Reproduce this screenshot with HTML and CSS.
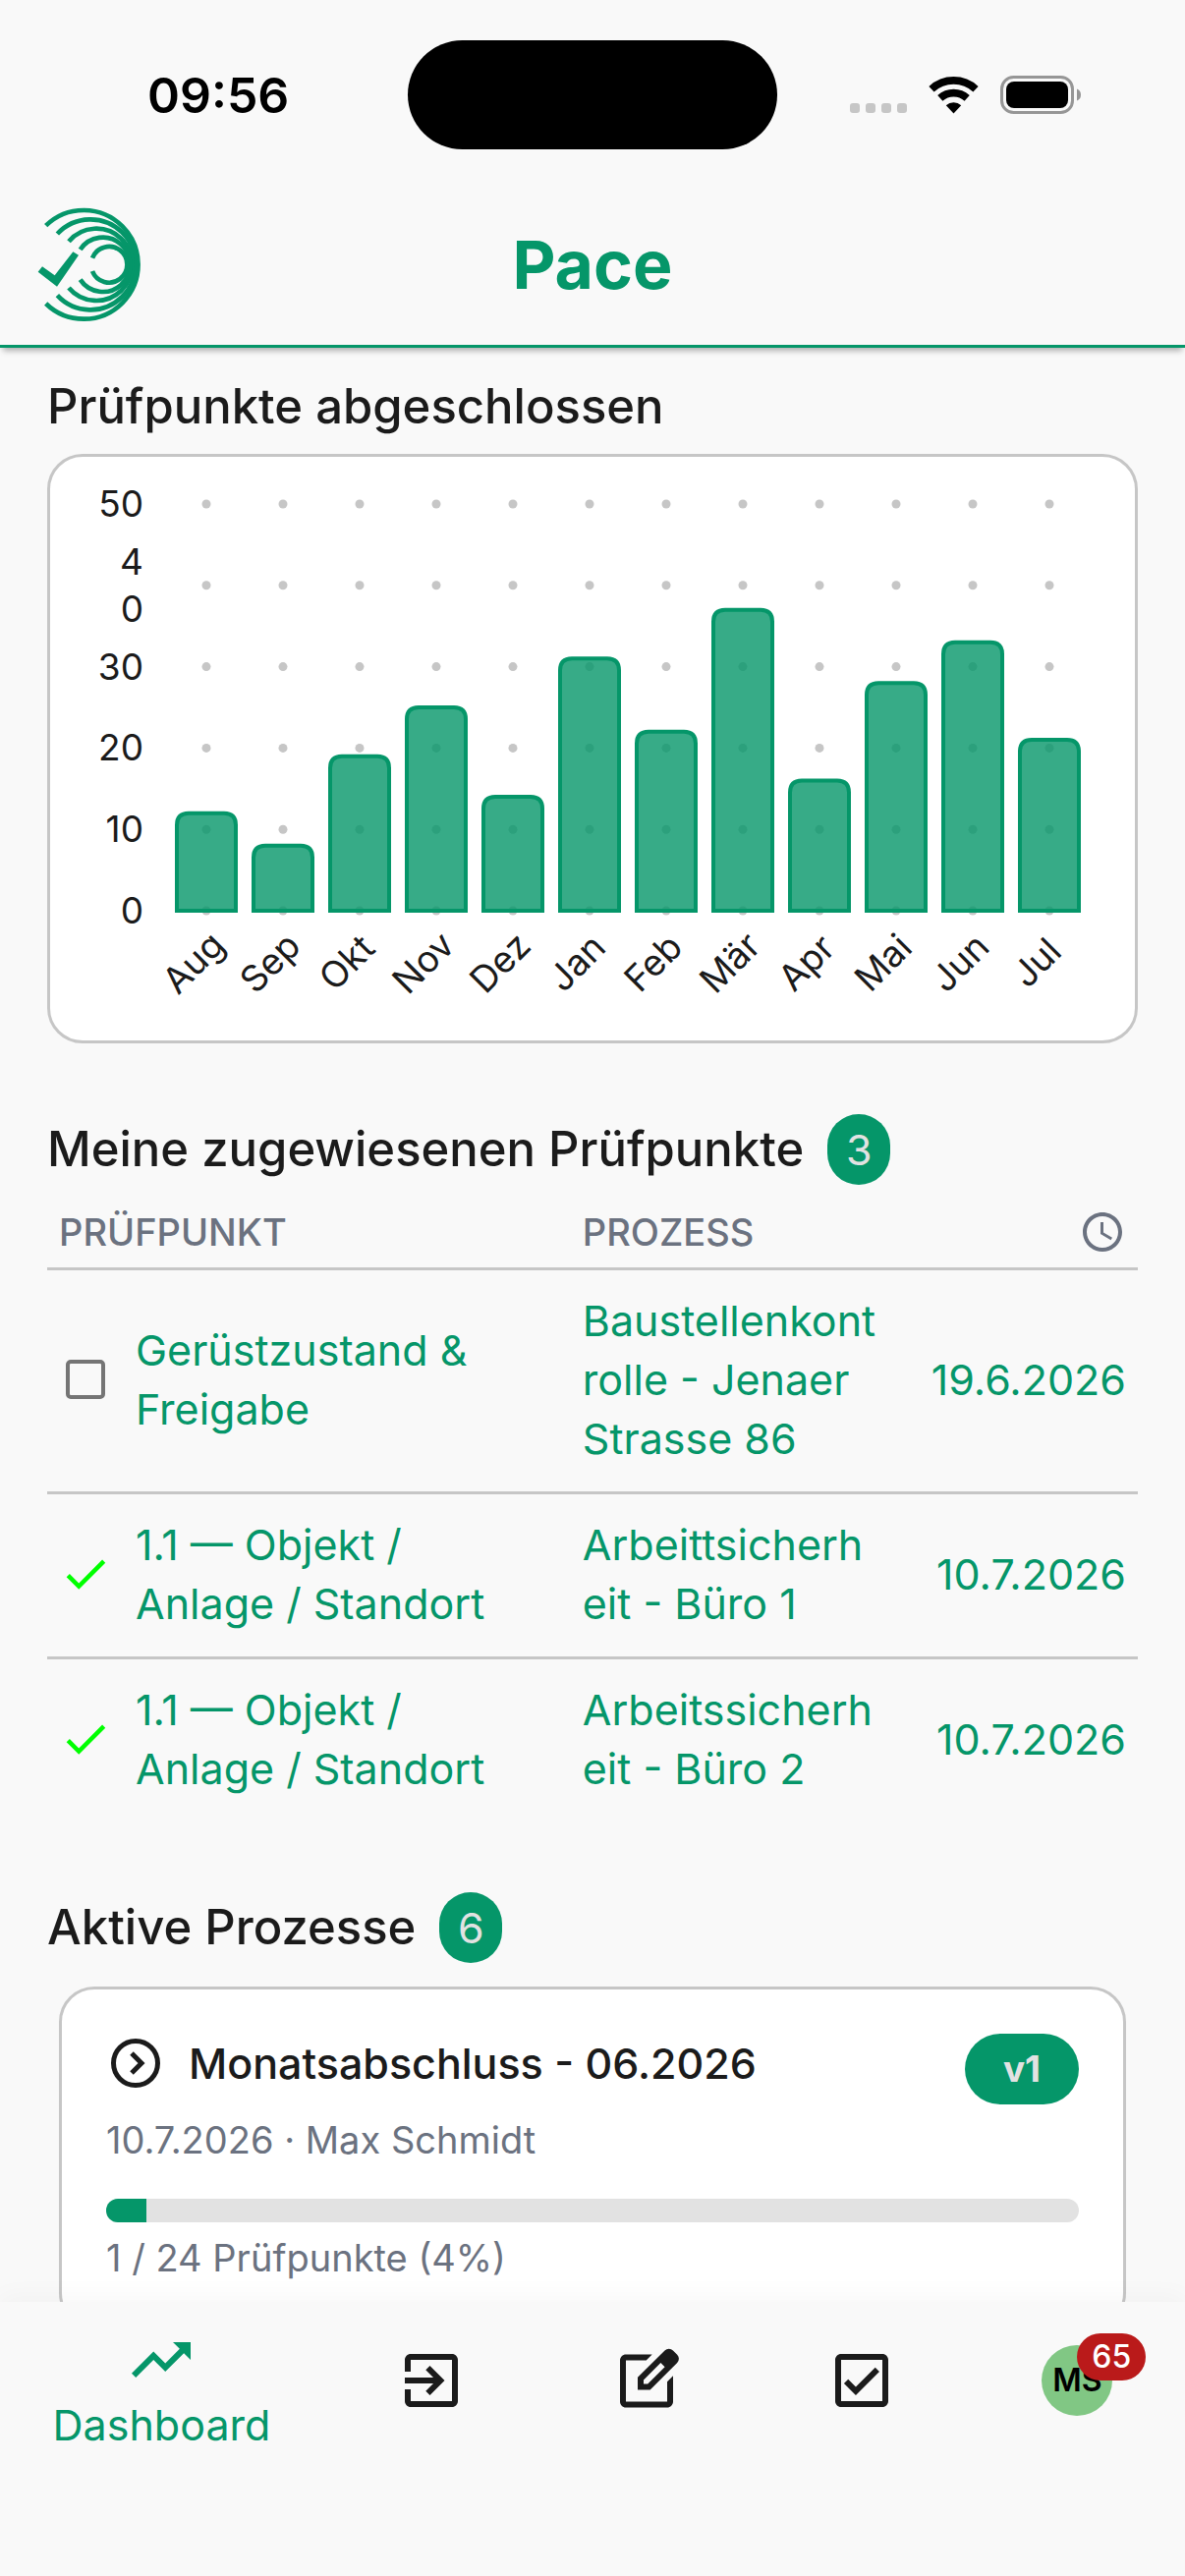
FILE: index.html
```
<!DOCTYPE html>
<html lang="de">
<head>
  <meta charset="UTF-8">
  <meta name="viewport" content="width=device-width, initial-scale=1.0">
  <title>Pace</title>
  <link rel="stylesheet" href="styles.css">
</head>
<body>
  <div class="status-bar">
    <span class="time">09:56</span>
    <div class="island"></div>
    <div class="status-icons">
      <div class="signal"><i></i><i></i><i></i><i></i></div>
      <svg class="wifi" viewBox="0 0 51 38">
        <g fill="none" stroke="#000" stroke-width="7.7">
          <path d="M3 12.7A33.1 33.1 0 0 1 48 12.7"/>
          <path d="M11.8 21.9A20.4 20.4 0 0 1 39.2 21.9"/>
        </g>
        <path d="M25.5 37.5L17.8 29.2A11.3 11.3 0 0 1 33.2 29.2Z"/>
      </svg>
      <svg class="battery" viewBox="0 0 82 39">
        <rect x="1.5" y="1.5" width="72" height="36" rx="12" fill="none" stroke="#969696" stroke-width="3"/>
        <rect x="6" y="6" width="63" height="27" rx="8"/>
        <path d="M78 13.5Q82 15 82 19.5T78 25.5Z" fill="#969696"/>
      </svg>
    </div>
  </div>

  <header class="app-bar">
    <svg class="logo" viewBox="54 62 318 354">
      <g fill="none" stroke="#059669" stroke-width="14">
        <path d="M80 121A166 166 0 1 1 80 359"/>
        <path d="M115 146A138 138 0 1 1 115 334"/>
        <path d="M150 169A110 110 0 1 1 150 311"/>
        <path d="M185 194A83 83 0 1 1 185 286"/>
        <path d="M222 220A55 55 0 1 1 222 260"/>
      </g>
      <path d="M56 262L69 246L107 273L163 201L180 211L114 307Z" fill="#059669"/>
    </svg>
    <h1>Pace</h1>
  </header>

  <main>
    <section>
      <div class="section-head">
        <h2>Prüfpunkte abgeschlossen</h2>
      </div>
      <div class="chart-card">
        <svg id="chart" class="chart" viewBox="0 0 1104 594"></svg>
      </div>
    </section>

    <section>
      <div class="section-head">
        <h2>Meine zugewiesenen Prüfpunkte</h2>
        <span class="count">3</span>
      </div>
      <table>
        <thead>
          <tr>
            <th class="col-point">PRÜFPUNKT</th>
            <th>PROZESS</th>
            <th class="col-date">
              <svg class="clock" viewBox="0 0 24 24" role="img" aria-label="Fällig"><path d="M11.99 2C6.47 2 2 6.48 2 12s4.47 10 9.99 10C17.52 22 22 17.52 22 12S17.52 2 11.99 2zM12 20c-4.42 0-8-3.58-8-8s3.58-8 8-8 8 3.58 8 8-3.58 8-8 8zm.5-13H11v6l5.25 3.15.75-1.23-4.5-2.67z"/></svg>
            </th>
          </tr>
        </thead>
        <tbody>
          <tr>
            <td>
              <div class="point">
                <input type="checkbox" id="point-1">
                <label for="point-1">Gerüstzustand &amp; Freigabe</label>
              </div>
            </td>
            <td><a href="#">Baustellenkontrolle - Jenaer Strasse 86</a></td>
            <td class="date">19.6.2026</td>
          </tr>
          <tr>
            <td>
              <div class="point">
                <svg class="done" viewBox="0 0 24 24"><path d="M9 16.17L4.83 12l-1.42 1.41L9 19 21 7l-1.41-1.41z"/></svg>
                <a href="#">1.1 — Objekt / Anlage / Standort</a>
              </div>
            </td>
            <td><a href="#">Arbeittsicherheit - Büro 1</a></td>
            <td class="date">10.7.2026</td>
          </tr>
          <tr>
            <td>
              <div class="point">
                <svg class="done" viewBox="0 0 24 24"><path d="M9 16.17L4.83 12l-1.42 1.41L9 19 21 7l-1.41-1.41z"/></svg>
                <a href="#">1.1 — Objekt / Anlage / Standort</a>
              </div>
            </td>
            <td><a href="#">Arbeitssicherheit - Büro 2</a></td>
            <td class="date">10.7.2026</td>
          </tr>
        </tbody>
      </table>
    </section>

    <section>
      <div class="section-head">
        <h2>Aktive Prozesse</h2>
        <span class="count">6</span>
      </div>
      <article class="process-card">
        <div class="process-head">
          <svg class="arrow" viewBox="0 0 24 24"><circle cx="12" cy="12" r="9"/><path d="M10.4 8L14.4 12l-4 4"/></svg>
          <h3>Monatsabschluss - 06.2026</h3>
          <span class="version">v1</span>
        </div>
        <p class="meta">10.7.2026 · Max Schmidt</p>
        <div class="progress"><div class="progress-fill" style="width: 4.17%"></div></div>
        <p class="meta">1 / 24 Prüfpunkte (4%)</p>
      </article>
    </section>
  </main>

  <nav class="bottom-nav">
    <button class="nav-item active">
      <svg viewBox="0 0 24 24"><path d="M16 6l2.29 2.29-4.88 4.88-4-4L2 16.59 3.41 18l6-6 4 4 6.3-6.29L22 12V6z"/></svg>
      <span>Dashboard</span>
    </button>
    <button class="nav-item" aria-label="Prozesse">
      <svg viewBox="0 0 24 24"><path d="M10.09 15.59L11.5 17l5-5-5-5-1.41 1.41L12.67 11H3v2h9.67l-2.58 2.59zM19 3H5c-1.11 0-2 .9-2 2v4h2V5h14v14H5v-4H3v4c0 1.1.89 2 2 2h14c1.1 0 2-.9 2-2V5c0-1.1-.9-2-2-2z"/></svg>
    </button>
    <button class="nav-item" aria-label="Vorlagen">
      <svg viewBox="0 0 24 24"><path d="M5 21.2c-1.1 0-2-.9-2-2v-14c0-1.1.9-2 2-2h8.9l-2 2H5v14h14v-6.8l2-2v8.8c0 1.1-.9 2-2 2zM9 15.2v-4.25l9.18-9.15a2 2 0 0 1 2.8 0l1.42 1.42a2 2 0 0 1 0 2.8L13.22 15.2zm2-2h1.4l5.8-5.8-1.4-1.4-5.8 5.8z"/></svg>
    </button>
    <button class="nav-item" aria-label="Aufgaben">
      <svg viewBox="0 0 24 24"><path d="M19 3H5c-1.11 0-2 .9-2 2v14c0 1.1.89 2 2 2h14c1.11 0 2-.9 2-2V5c0-1.1-.89-2-2-2zm0 16H5V5h14v14zM17.99 9l-1.41-1.42-6.59 6.59-2.58-2.57-1.42 1.41 4 3.99z"/></svg>
    </button>
    <button class="nav-item" aria-label="Profil">
      <span class="avatar">MS<span class="badge">65</span></span>
    </button>
  </nav>

  <script>
    // Completed checkpoints per month
    const months = [
      { name: 'Aug', value: 12 },
      { name: 'Sep', value: 8 },
      { name: 'Okt', value: 19 },
      { name: 'Nov', value: 25 },
      { name: 'Dez', value: 14 },
      { name: 'Jan', value: 31 },
      { name: 'Feb', value: 22 },
      { name: 'Mär', value: 37 },
      { name: 'Apr', value: 16 },
      { name: 'Mai', value: 28 },
      { name: 'Jun', value: 33 },
      { name: 'Jul', value: 21 }
    ];

    const baseline = 462;
    const unit = 8.28;
    const firstX = 159;
    const step = 78;

    // Function to draw the bar chart
    function renderChart() {
      let dots = '';
      let bars = '';
      let labels = '';

      for (let v = 0; v <= 50; v += 10) {
        const y = baseline - v * unit;
        months.forEach((m, i) => {
          dots += `<circle class="dot" cx="${firstX + i * step}" cy="${y}" r="4.5"/>`;
        });
        if (v === 40) {
          labels += `<text class="tick" x="95" y="${y - 11}">4</text><text class="tick" x="95" y="${y + 37}">0</text>`;
        } else {
          labels += `<text class="tick" x="95" y="${y + 13}">${v}</text>`;
        }
      }

      months.forEach((m, i) => {
        const x = firstX + i * step;
        const top = baseline - m.value * unit;
        bars += `<path class="bar" d="M${x - 30} ${baseline}V${top + 12}q0 -12 12 -12h36q12 0 12 12V${baseline}z"/>`;
        labels += `<text class="month" transform="translate(${x - 4} 524) rotate(-45)">${m.name}</text>`;
      });

      document.getElementById('chart').innerHTML = dots + bars + labels;
    }

    renderChart();
  </script>
</body>
</html>
```
FILE: styles.css
```
:root {
  --bg: #f9f9f9;
  --card: #fff;
  --text: #1b1b1b;
  --muted: #6b7280;
  --line: #c6c6c6;
  --primary: #059669;
  --on-primary: #e2e2e2;
}
* {
  box-sizing: border-box;
}
body {
  margin: 0;
  height: 100vh;
  display: flex;
  flex-direction: column;
  background: var(--bg);
  color: var(--text);
  font-family: Inter, 'Liberation Sans', sans-serif;
  font-size: 43px;
  line-height: 60px;
}
h1, h2, h3, p {
  margin: 0;
  font-weight: 500;
}
a {
  color: inherit;
  text-decoration: none;
}

/* Status bar */
.status-bar {
  display: grid;
  grid-template-columns: 1fr 376px 1fr;
  align-items: center;
  padding: 41px 106px 34px;
}
.time {
  padding-left: 44px;
  color: #000;
  font-size: 50px;
  font-weight: 600;
}
.island {
  height: 111px;
  border-radius: 56px;
  background: #000;
}
.status-icons {
  display: flex;
  justify-content: flex-end;
  align-items: center;
  gap: 22px;
}
.signal {
  display: flex;
  gap: 6px;
  padding-top: 26px;
}
.signal i {
  width: 10px;
  height: 10px;
  border-radius: 3px;
  background: #c6c6c6;
}
.wifi {
  width: 51px;
  height: 38px;
}
.battery {
  width: 82px;
  height: 39px;
}

/* App bar */
.app-bar {
  display: grid;
  grid-template-columns: 1fr auto 1fr;
  align-items: center;
  height: 168px;
  padding: 0 38px;
  border-bottom: 3px solid var(--primary);
  box-shadow: 0 6px 6px -3px rgba(0, 0, 0, 0.3);
}
.logo {
  width: 106px;
  height: 118px;
}
h1 {
  color: var(--primary);
  font-size: 68px;
  font-weight: 700;
  line-height: 84px;
}

/* Content */
main {
  flex: 1;
  min-height: 0;
  display: flex;
  flex-direction: column;
  gap: 72px;
  padding: 24px 48px 0;
  overflow: hidden;
}
.section-head {
  display: flex;
  align-items: center;
  gap: 24px;
  margin-bottom: 12px;
}
h2 {
  font-size: 49px;
  line-height: 72px;
}
.count {
  min-width: 64px;
  padding: 6px 18px;
  border-radius: 36px;
  background: var(--primary);
  color: var(--on-primary);
  text-align: center;
}

/* Chart */
.chart-card {
  border: 3px solid var(--line);
  border-radius: 36px;
  background: var(--card);
}
.chart {
  display: block;
  width: 100%;
}
.dot {
  fill: var(--line);
}
.bar {
  fill: rgba(5, 150, 105, 0.8);
  stroke: var(--primary);
  stroke-width: 4px;
}
.tick, .month {
  fill: var(--text);
  font-size: 37px;
}
.tick {
  text-anchor: end;
}
.month {
  text-anchor: middle;
}

/* Table */
table {
  width: 100%;
  table-layout: fixed;
  border-collapse: separate;
  border-spacing: 0;
}
th {
  height: 75px;
  padding: 0 12px;
  border-bottom: 3px solid var(--line);
  color: var(--muted);
  font-size: 38px;
  font-weight: 500;
  text-align: left;
}
td {
  padding: 21px 12px 24px;
  border-bottom: 3px solid var(--line);
  color: var(--primary);
  overflow-wrap: anywhere;
}
tr:last-child td {
  border-bottom: none;
}
.col-point {
  width: 48%;
}
.col-date {
  width: 248px;
}
.date {
  text-align: right;
}
.point {
  display: flex;
  align-items: center;
  gap: 24px;
  padding-right: 24px;
}
.point input {
  flex: none;
  appearance: none;
  width: 40px;
  height: 40px;
  margin: 0 7px;
  border: 4px solid #757575;
  border-radius: 5px;
}
.done {
  flex: none;
  width: 54px;
  height: 54px;
  fill: #00ff00;
}
.clock {
  display: block;
  width: 48px;
  height: 48px;
  margin-left: auto;
  fill: var(--muted);
}

/* Process card */
.process-card {
  margin: 24px 12px 0;
  padding: 45px;
  border: 3px solid var(--line);
  border-radius: 36px;
  background: var(--card);
}
.process-head {
  display: flex;
  align-items: flex-start;
  gap: 24px;
  margin-bottom: 12px;
}
h3 {
  flex: 1;
  font-size: 43px;
}
.arrow {
  width: 60px;
  height: 60px;
  fill: none;
  stroke: var(--text);
  stroke-width: 2;
}
.version {
  min-width: 116px;
  padding: 6px 24px;
  border-radius: 36px;
  background: var(--primary);
  color: var(--on-primary);
  font-size: 37px;
  font-weight: 700;
  text-align: center;
}
.meta {
  color: var(--muted);
  font-size: 38px;
  font-weight: 400;
  line-height: 48px;
}
.progress {
  height: 24px;
  margin: 36px 0 12px;
  border-radius: 12px;
  background: #e2e2e2;
  overflow: hidden;
}
.progress-fill {
  height: 100%;
  background: var(--primary);
}

/* Bottom navigation */
.bottom-nav {
  display: flex;
  align-items: flex-start;
  padding-bottom: 120px;
  background: var(--bg);
  box-shadow: 0 -6px 24px rgba(0, 0, 0, 0.03);
  z-index: 1;
}
.nav-item {
  flex: 2 0 0;
  height: 159px;
  display: flex;
  flex-direction: column;
  justify-content: center;
  align-items: center;
  padding: 0;
  border: none;
  background: none;
  color: var(--text);
  font: inherit;
}
.nav-item.active {
  flex-grow: 3;
  padding-top: 18px;
  color: var(--primary);
}
.nav-item svg {
  width: 72px;
  height: 72px;
  fill: currentColor;
}
.avatar {
  position: relative;
  width: 72px;
  height: 72px;
  border-radius: 50%;
  background: #81c784;
  color: #000;
  font-size: 32px;
  font-weight: 600;
  line-height: 72px;
}
.badge {
  position: absolute;
  top: -12px;
  left: 36px;
  min-width: 70px;
  border-radius: 24px;
  background: #ba1a1a;
  color: #fff;
  font-weight: 500;
  line-height: 48px;
}
```
